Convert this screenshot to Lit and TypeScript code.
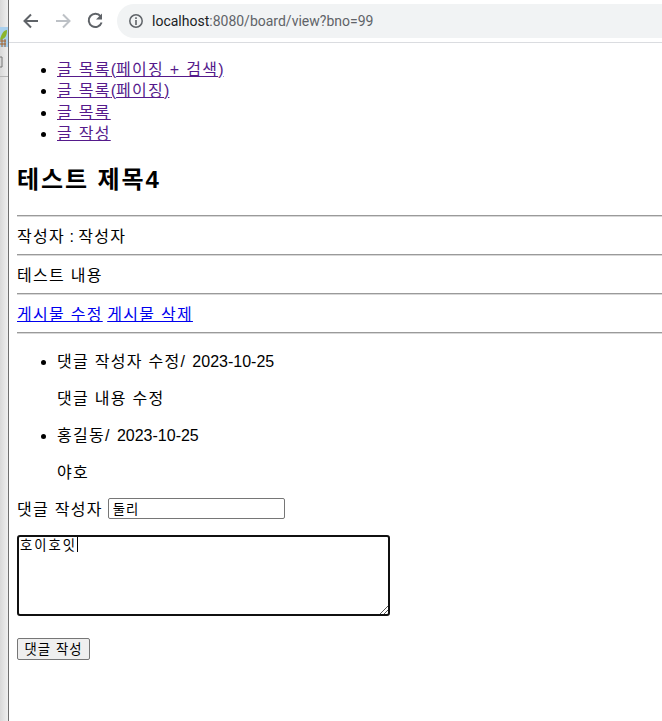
import { LitElement, html, css } from "lit";
import { customElement } from "lit/decorators.js";

/* Hangul runs are set slightly wider than the default CJK face, Latin stays untouched. */
const k = (text: string) =>
  text.split(/([\uAC00-\uD7A3]+(?: [\uAC00-\uD7A3+]+| \+)*(?: )?)/).map((part, i) =>
    i % 2 ? html`<span class="k">${part}</span>` : part
  );

@customElement("app-root")
export class AppRoot extends LitElement {
  static styles = css`
    :host { display: block; height: 721px; overflow: hidden; background: #fff; color: #000;
      font: 16px/21.33px "Liberation Sans", "Noto Sans CJK KR", sans-serif; }
    .k { letter-spacing: 0.08em; }
    .slash { letter-spacing: 1.5px; }
    .window { display: flex; height: 721px; }
    .side { width: 8px; flex: none; border-right: 1px solid #6e6e6e; background: linear-gradient(90deg, #d8d8d8, #efefef); display: flex; flex-direction: column; }
    .side .tab { height: 20px; margin-top: 27px; background: #a9d0ee; display: flex; align-items: center; }
    .side .sep { height: 29px; border-bottom: 1px solid #b5b5b5; display: flex; align-items: center; }
    .main { flex: 1; min-width: 0; display: flex; flex-direction: column; }
    .bar { flex: none; box-sizing: border-box; border-bottom: 1px solid #dadce0; display: flex; align-items: center; padding: 0 0 0 12px; background: #fff; height: 43px; }
    .nav { width: 20px; height: 20px; margin-right: 12px; display: block; }
    .omni { flex: 1; height: 34px; margin-right: -20px; border-radius: 17px; background: #f1f3f4; display: flex; align-items: center; padding-left: 11px; font: 14px "Roboto", sans-serif; color: #5f6368; }
    .omni svg { width: 16px; height: 16px; margin-right: 8px; }
    .omni b { font-weight: 400; color: #202124; }
    .page { padding: 0 0 0 8px; }
    ul { margin: 16px 0; padding-left: 40px; }
    .menu { margin-bottom: 0; }
    a { color: #00e; }
    a.v { color: #551a8b; }
    h2 { font-size: 24px; line-height: 32px; margin: 19.92px 0 19px; }
    hr { margin: 8px 0; border: 0; height: 2px; background: linear-gradient(#9a9a9a 50%, #d8d8d8 50%); }
    .row { height: 21px; line-height: 23px; }
    .c p { margin: 16px 0; }
    .c { margin: 17px 0 14px; }
    .c li + li { margin-top: 16px; }
    .c li:first-child p { margin-top: 15px; }
    .c p:last-child { margin-bottom: 0; }
    .author { height: 21px; display: flex; align-items: flex-start; gap: 5px; }
    .author span.label { margin-top: 1px; }
    input { width: 177px; height: 21px; box-sizing: border-box; border: 1px solid #767676; border-radius: 2px; padding: 1px 4px; font: 13.33px "Liberation Sans", "Noto Sans CJK KR", sans-serif; letter-spacing: 0.08em; margin: 0; outline: none; background: #fff; }
    .ta { display: block; position: relative; box-sizing: border-box; width: 373px; height: 81px; margin-top: 16px; border: 2px solid #101010; border-radius: 3px; padding: 0 1px; font: 13.33px/17px "Liberation Sans", "Noto Sans CJK KR", sans-serif; letter-spacing: 2px; }
    .ta i { display: inline-block; width: 1px; height: 15px; background: #000; vertical-align: -2px; }
    .grip { position: absolute; right: 0; bottom: 0; width: 9px; height: 9px; display: block; }
    button { display: block; margin-top: 22px; width: 73px; height: 22px; box-sizing: border-box; border: 1px solid #767676; border-radius: 2px; background: #efefef; padding: 0; font: 13.33px "Liberation Sans", "Noto Sans CJK KR", sans-serif; color: #000; }
  `;

  render() {
    return html`<div class="window">
      <div class="side">
        <div class="tab"><svg width="8" height="20" viewBox="0 0 8 20"><path d="M0 13C1 7 4 3 7 3C7 9 5 12 0 13Z" fill="#8cb52d"/><path d="M0 14H6M0 17H6M2 12V20M5 12V20" stroke="#a5622a" fill="none"/></svg></div>
        <div class="sep"><svg width="8" height="14" viewBox="0 0 8 14"><path d="M0 2H2V12H0" stroke="#777" fill="none"/></svg></div>
      </div>
      <div class="main">
        <div class="bar">
          <svg class="nav" viewBox="0 0 20 20"><path d="M17 10H4M10 3.5L3.5 10L10 16.5" fill="none" stroke="#5f6368" stroke-width="2"/></svg>
          <svg class="nav" viewBox="0 0 20 20"><path d="M3 10H16M10 3.5L16.5 10L10 16.5" fill="none" stroke="#bdc1c6" stroke-width="2"/></svg>
          <svg class="nav" viewBox="0 0 20 20"><path d="M15.6 5.4A6.6 6.6 0 1 0 16.6 11.5" fill="none" stroke="#5f6368" stroke-width="2"/><path d="M17 2.5V8.5H11Z" fill="#5f6368"/></svg>
          <div class="omni">
            <svg viewBox="0 0 16 16"><circle cx="8" cy="8" r="6.2" fill="none" stroke="#5f6368" stroke-width="1.5"/><path d="M8 7V12M8 4.3V6" stroke="#5f6368" stroke-width="1.6"/></svg>
            <span><b>localhost</b>:8080/board/view?bno=99</span>
          </div>
        </div>
        <div class="page">
          <ul class="menu">
            <li><a class="v" href="#">${k("글 목록")}(${k("페이징 + 검색")})</a></li>
            <li><a class="v" href="#">${k("글 목록")}(${k("페이징")})</a></li>
            <li><a class="v" href="#">${k("글 목록")}</a></li>
            <li><a class="v" href="#">${k("글 작성")}</a></li>
          </ul>
          <h2>${k("테스트 제목")}4</h2>
          <hr />
          <div class="row">${k("작성자")} : ${k("작성자")}</div>
          <hr />
          <div class="row">${k("테스트 내용")}</div>
          <hr />
          <div class="row"><a href="#">${k("게시물 수정")}</a> <a href="#">${k("게시물 삭제")}</a></div>
          <hr />
          <ul class="c">
            <li>${k("댓글 작성자 수정")}<span class="slash">/ </span>2023-10-25<p>${k("댓글 내용 수정")}</p></li>
            <li>${k("홍길동")}<span class="slash">/ </span>2023-10-25<p>${k("야호")}</p></li>
          </ul>
          <div class="author"><span class="label">${k("댓글 작성자")}</span><input .value=${"둘리"} /></div>
          <div class="ta">호이호잇<i></i><svg class="grip" viewBox="0 0 9 9"><path d="M1 9L9 1M5 9L9 5" stroke="#555" fill="none"/></svg></div>
          <button><span class="k">댓글 작성</span></button>
        </div>
      </div>
    </div>`;
  }
}
